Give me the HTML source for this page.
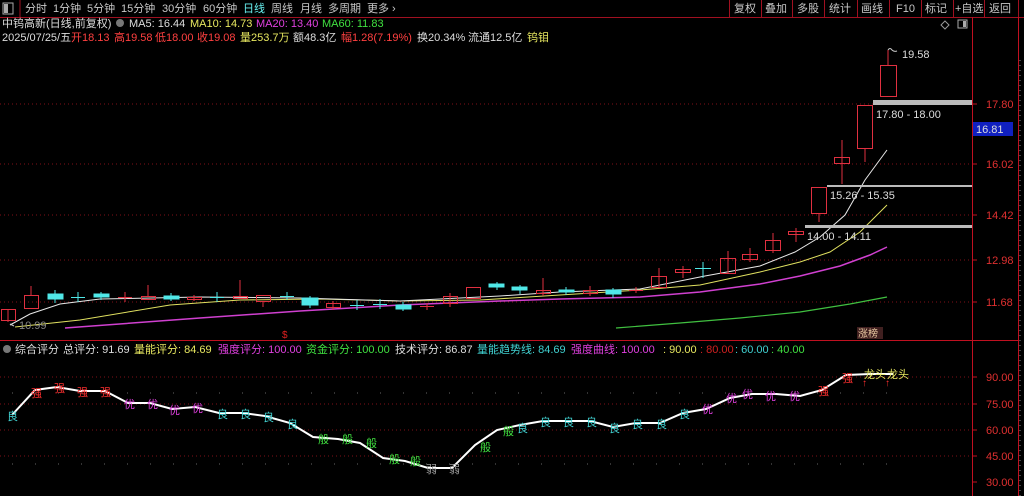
<!DOCTYPE html><html><head><meta charset="utf-8"><style>
html,body{margin:0;padding:0;background:#000;width:1024px;height:496px;overflow:hidden}
svg{display:block;font-family:"Liberation Sans","Noto Sans CJK SC",sans-serif}
</style></head><body>
<svg width="1024" height="496" viewBox="0 0 1024 496" xmlns="http://www.w3.org/2000/svg">
<rect width="1024" height="496" fill="#000"/>
<!-- top bar -->
<rect x="3" y="3" width="10" height="11" fill="none" stroke="#aaa"/><rect x="4" y="4" width="4" height="9" fill="#aaa"/>
<line x1="20" y1="0" x2="20" y2="17" stroke="#a01020"/>
<line x1="0" y1="17.5" x2="1024" y2="17.5" stroke="#a01020"/>
<g font-size="11" fill="#c8c8c8">
<text x="25" y="12">分时</text><text x="53" y="12">1分钟</text><text x="87" y="12">5分钟</text><text x="121" y="12">15分钟</text><text x="162" y="12">30分钟</text><text x="203" y="12">60分钟</text>
<text x="243" y="12" fill="#6ee">日线</text><text x="271" y="12">周线</text><text x="300" y="12">月线</text><text x="328" y="12">多周期</text><text x="367" y="12">更多 ›</text>
</g>
<g stroke="#a01020" fill="none">
<line x1="729.5" y1="0" x2="729.5" y2="17"/><line x1="761.5" y1="0" x2="761.5" y2="17"/><line x1="792.5" y1="0" x2="792.5" y2="17"/><line x1="824.5" y1="0" x2="824.5" y2="17"/><line x1="857.5" y1="0" x2="857.5" y2="17"/><line x1="889.5" y1="0" x2="889.5" y2="17"/><line x1="921.5" y1="0" x2="921.5" y2="17"/><line x1="953.5" y1="0" x2="953.5" y2="17"/><line x1="984.5" y1="0" x2="984.5" y2="17"/><line x1="1018.5" y1="0" x2="1018.5" y2="17"/>
</g>
<g font-size="11" fill="#c8c8c8">
<text x="734" y="12">复权</text><text x="765" y="12">叠加</text><text x="797" y="12">多股</text><text x="829" y="12">统计</text><text x="861" y="12">画线</text><text x="896" y="12">F10</text><text x="925" y="12">标记</text><text x="955" y="12">+自选</text><text x="989" y="12">返回</text>
</g>
<!-- info lines -->
<g font-size="11">
<text x="2" y="27" fill="#ddd">中钨高新(日线,前复权)</text>
<circle cx="120" cy="23" r="4" fill="#777"/>
<text x="129" y="27" fill="#ddd">MA5: 16.44</text>
<text x="190" y="27" fill="#e8e860">MA10: 14.73</text>
<text x="256" y="27" fill="#e040e0">MA20: 13.40</text>
<text x="322" y="27" fill="#40e040">MA60: 11.83</text>
<text x="2" y="41" fill="#ddd">2025/07/25/五</text>
<text x="71" y="41" fill="#ff4040">开18.13</text>
<text x="114" y="41" fill="#ff4040">高19.58</text>
<text x="155" y="41" fill="#ff4040">低18.00</text>
<text x="197" y="41" fill="#ff4040">收19.08</text>
<text x="240" y="41" fill="#e8e860">量253.7万</text>
<text x="293" y="41" fill="#ddd">额48.3亿</text>
<text x="341" y="41" fill="#ff4040">幅1.28(7.19%)</text>
<text x="417" y="41" fill="#ddd">换20.34%</text>
<text x="468" y="41" fill="#ddd">流通12.5亿</text>
<text x="527" y="41" fill="#e8e860">钨钼</text>
</g>
<!-- right axis lines -->
<line x1="972.5" y1="17" x2="972.5" y2="496" stroke="#c01020"/>
<line x1="1018.5" y1="17" x2="1018.5" y2="496" stroke="#c01020"/>
<line x1="1020" y1="60" x2="1020" y2="496" stroke="#888" stroke-dasharray="1 4"/>
<line x1="0" y1="340.5" x2="1018" y2="340.5" stroke="#c01020"/>
<!-- icons top right -->
<path d="M945 21 l4 4 l-4 4 l-4 -4z" fill="none" stroke="#999"/>
<rect x="958" y="20" width="9" height="8" fill="none" stroke="#aaa"/><rect x="963" y="21" width="3" height="6" fill="#aaa"/>
<!-- price grid -->
<g stroke="#801018" stroke-dasharray="1 3">
<line x1="0" y1="104" x2="972" y2="104"/><line x1="0" y1="164" x2="972" y2="164"/><line x1="0" y1="215" x2="972" y2="215"/><line x1="0" y1="260" x2="972" y2="260"/><line x1="0" y1="302" x2="972" y2="302"/>
</g>
<g stroke="#c01020"><line x1="972" y1="104" x2="977" y2="104"/><line x1="972" y1="164" x2="977" y2="164"/><line x1="972" y1="215" x2="977" y2="215"/><line x1="972" y1="260" x2="977" y2="260"/><line x1="972" y1="302" x2="977" y2="302"/></g>
<g font-size="11" fill="#e03030">
<text x="986" y="108">17.80</text><text x="986" y="168">16.02</text><text x="986" y="219">14.42</text><text x="986" y="264">12.98</text><text x="986" y="306">11.68</text>
</g>
<rect x="973" y="122" width="40" height="14" fill="#1020c0"/>
<text x="976" y="133" font-size="11" fill="#ddd">16.81</text>
<!-- MA lines -->
<polyline fill="none" stroke="#40c040" stroke-width="1.2" points="616,328 680,323 740,318 800,312 850,304 887,297"/>
<polyline fill="none" stroke="#d040d0" stroke-width="1.5" points="65,328 200,318 300,311 400,305 500,301 560,299 640,297 700,292 760,284 800,276 840,266 870,255 887,247"/>
<polyline fill="none" stroke="#e0e060" stroke-width="1" points="15,327 80,320 170,305 240,300 320,299 400,301 480,300 560,295 640,290 700,285 760,272 800,262 830,252 860,232 887,205"/>
<polyline fill="none" stroke="#e8e8e8" stroke-width="1" points="10,325 30,314 60,304 100,299 200,297 300,298 400,301 500,296 560,292 640,289 705,276 760,266 795,252 820,237 845,215 865,180 887,150"/>
<!-- candles -->
<g stroke="#e03040" fill="none" stroke-width="1">
<line x1="8" y1="309" x2="8" y2="322"/><rect x="1.5" y="309.5" width="14" height="11"/>
<line x1="31" y1="286" x2="31" y2="295"/><rect x="24.5" y="295.5" width="14" height="13"/>
<line x1="125" y1="292" x2="125" y2="302"/><line x1="118" y1="297.5" x2="132" y2="297.5"/>
<line x1="148" y1="285" x2="148" y2="296"/><rect x="141.5" y="296.5" width="14" height="3"/>
<line x1="194" y1="295" x2="194" y2="301"/><rect x="187.5" y="297.5" width="14" height="2"/>
<line x1="240" y1="280" x2="240" y2="296"/><rect x="233.5" y="296.5" width="14" height="2"/>
<line x1="263" y1="301" x2="263" y2="307"/><rect x="256.5" y="295.5" width="14" height="6"/>
<rect x="326.5" y="303.5" width="14" height="4"/><line x1="333" y1="301" x2="333" y2="310"/>
<line x1="420" y1="306.5" x2="434" y2="306.5"/><line x1="427" y1="303" x2="427" y2="310"/>
<line x1="450" y1="293" x2="450" y2="307"/><rect x="443.5" y="296.5" width="14" height="7"/>
<rect x="466.5" y="287.5" width="14" height="11"/>
<line x1="543" y1="278" x2="543" y2="296"/><rect x="536.5" y="290.5" width="14" height="3"/>
<line x1="590" y1="286" x2="590" y2="296"/><rect x="583.5" y="290.5" width="14" height="3"/>
<line x1="636" y1="287" x2="636" y2="293"/><line x1="629" y1="290.5" x2="643" y2="290.5"/>
<line x1="659" y1="268" x2="659" y2="287"/><rect x="651.5" y="276.5" width="15" height="11"/>
<line x1="683" y1="266" x2="683" y2="278"/><rect x="675.5" y="269.5" width="15" height="3"/>
<line x1="728" y1="251" x2="728" y2="274"/><rect x="720.5" y="258.5" width="15" height="15"/>
<line x1="750" y1="248" x2="750" y2="262"/><rect x="742.5" y="254.5" width="15" height="5"/>
<line x1="773" y1="233" x2="773" y2="253"/><rect x="765.5" y="240.5" width="15" height="10"/>
<line x1="796" y1="228" x2="796" y2="242"/><rect x="788.5" y="231.5" width="15" height="3"/>
<line x1="819" y1="213" x2="819" y2="222"/><rect x="811.5" y="187.5" width="15" height="26"/>
<line x1="842" y1="140" x2="842" y2="184"/><rect x="834.5" y="157.5" width="15" height="6"/>
<line x1="865" y1="148" x2="865" y2="162"/><rect x="857.5" y="105.5" width="15" height="43"/>
<line x1="888" y1="50" x2="888" y2="65"/><rect x="880.5" y="65.5" width="16" height="31"/>
</g>
<g stroke="#50e8e8" fill="#50e8e8">
<line x1="55" y1="290" x2="55" y2="303"/><rect x="48" y="294" width="15" height="5"/>
<line x1="78" y1="292" x2="78" y2="302" fill="none"/><line x1="71" y1="297.5" x2="85" y2="297.5"/>
<line x1="101" y1="292" x2="101" y2="300"/><rect x="94" y="294" width="15" height="3"/>
<line x1="171" y1="293" x2="171" y2="301"/><rect x="164" y="296" width="15" height="3"/>
<line x1="217" y1="292" x2="217" y2="302"/><line x1="210" y1="297.5" x2="224" y2="297.5"/>
<line x1="287" y1="292" x2="287" y2="300"/><line x1="280" y1="296.5" x2="294" y2="296.5"/>
<rect x="302" y="298" width="16" height="7"/><line x1="310" y1="296" x2="310" y2="308"/>
<line x1="357" y1="300" x2="357" y2="310"/><line x1="350" y1="305.5" x2="364" y2="305.5"/>
<line x1="380" y1="299" x2="380" y2="309"/><line x1="373" y1="304.5" x2="387" y2="304.5"/>
<rect x="396" y="305" width="15" height="4"/><line x1="403" y1="302" x2="403" y2="311"/>
<rect x="489" y="284" width="15" height="3"/><line x1="497" y1="282" x2="497" y2="290"/>
<rect x="512" y="287" width="15" height="3"/><line x1="520" y1="285" x2="520" y2="294"/>
<rect x="559" y="290" width="15" height="2"/><line x1="566" y1="287" x2="566" y2="295"/>
<rect x="606" y="290" width="15" height="4"/><line x1="613" y1="288" x2="613" y2="298"/>
<line x1="703" y1="262" x2="703" y2="278"/><line x1="695" y1="268.5" x2="711" y2="268.5"/>
</g>
<!-- hi / lo labels -->
<path d="M888 50 q2 -3 4 0 q2 2 5 1" stroke="#ccc" fill="none"/>
<text x="902" y="58" font-size="11" fill="#ddd">19.58</text>
<path d="M10 324 l4 2" stroke="#ccc"/>
<text x="19" y="329" font-size="11" fill="#888">10.99</text>
<!-- gray bars -->
<rect x="873" y="100" width="99" height="5" fill="#bbb"/>
<text x="876" y="118" font-size="11" fill="#ddd">17.80 - 18.00</text>
<rect x="827" y="185" width="145" height="2" fill="#bbb"/>
<text x="830" y="199" font-size="11" fill="#ddd">15.26 - 15.35</text>
<rect x="805" y="225" width="167" height="3" fill="#bbb"/>
<text x="807" y="240" font-size="11" fill="#ddd">14.00 - 14.11</text>
<text x="282" y="338" font-size="10" fill="#e02020">$</text>
<rect x="857" y="327" width="26" height="12" fill="#402020"/>
<text x="858" y="337" font-size="10" fill="#e8c8a0">涨榜</text>
<!-- lower panel header -->
<circle cx="7" cy="349" r="4" fill="#777"/>
<g font-size="11">
<text x="15" y="353" fill="#ddd">综合评分</text>
<text x="63" y="353" fill="#ddd">总评分: 91.69</text>
<text x="134" y="353" fill="#e8e860">量能评分: 84.69</text>
<text x="218" y="353" fill="#e040e0">强度评分: 100.00</text>
<text x="306" y="353" fill="#40e040">资金评分: 100.00</text>
<text x="395" y="353" fill="#ddd">技术评分: 86.87</text>
<text x="477" y="353" fill="#40d0d0">量能趋势线: 84.69</text>
<text x="571" y="353" fill="#e040e0">强度曲线: 100.00</text>
<text x="663" y="353" fill="#e8e860">: 90.00</text>
<text x="700" y="353" fill="#d02020">: 80.00</text>
<text x="735" y="353" fill="#40d0d0">: 60.00</text>
<text x="771" y="353" fill="#40e040">: 40.00</text>
</g>
<!-- lower grid -->
<g stroke="#801018" stroke-dasharray="1 3">
<line x1="0" y1="377" x2="972" y2="377"/><line x1="0" y1="404" x2="972" y2="404"/><line x1="0" y1="430" x2="972" y2="430"/><line x1="0" y1="456" x2="972" y2="456"/>
</g>
<g stroke="#666" stroke-dasharray="1 22"><line x1="12" y1="393" x2="900" y2="393"/><line x1="12" y1="464" x2="900" y2="464"/></g>
<g font-size="11" fill="#e03030">
<text x="986" y="381">90.00</text><text x="986" y="408">75.00</text><text x="986" y="434">60.00</text><text x="986" y="460">45.00</text><text x="986" y="486">30.00</text>
</g>
<g stroke="#c01020"><line x1="972" y1="377" x2="977" y2="377"/><line x1="972" y1="404" x2="977" y2="404"/><line x1="972" y1="430" x2="977" y2="430"/><line x1="972" y1="456" x2="977" y2="456"/><line x1="972" y1="482" x2="977" y2="482"/></g>
<polyline fill="none" stroke="#fff" stroke-width="2" points="12,415 35,390 57,387 80,391 105,391 128,403 150,403 172,409 195,407 219,413 243,413 265,416 290,423 313,437 338,439 360,443 383,458 405,461 428,468 452,468 475,445 497,430 520,425 543,421 566,421 590,421 613,427 636,423 660,423 683,413 706,409 730,398 752,394 776,394 800,396 822,390 846,375 870,374 893,374"/>
<g font-size="11">
<g fill="#40d0d0"><text x="7" y="420">良</text><text x="517" y="432">良</text><text x="540" y="426">良</text><text x="563" y="426">良</text><text x="586" y="426">良</text><text x="609" y="432">良</text><text x="632" y="428">良</text><text x="656" y="428">良</text><text x="679" y="418">良</text><text x="217" y="418">良</text><text x="240" y="418">良</text><text x="263" y="421">良</text><text x="287" y="428">良</text></g>
<g fill="#ff3030"><text x="31" y="397">强</text><text x="54" y="392">强</text><text x="77" y="396">强</text><text x="100" y="396">强</text><text x="818" y="395">强</text><text x="842" y="382">强</text></g>
<g fill="#e040e0"><text x="124" y="408">优</text><text x="147" y="408">优</text><text x="169" y="414">优</text><text x="192" y="412">优</text><text x="702" y="413">优</text><text x="726" y="402">优</text><text x="742" y="398">优</text><text x="765" y="400">优</text><text x="789" y="400">优</text></g>
<g fill="#40e040"><text x="318" y="443">般</text><text x="342" y="443">般</text><text x="366" y="447">般</text><text x="389" y="463">般</text><text x="410" y="465">般</text><text x="480" y="451">般</text><text x="503" y="435">般</text></g>
<g fill="#999"><text x="426" y="473">弱</text><text x="449" y="473">弱</text></g>
<g fill="#e8e860"><text x="864" y="378">龙头</text><text x="887" y="378">龙头</text></g>
<g fill="#ff3030"><text x="862" y="386" font-size="10">↑</text><text x="885" y="386" font-size="10">↑</text></g>
</g>
</svg>
</body></html>
